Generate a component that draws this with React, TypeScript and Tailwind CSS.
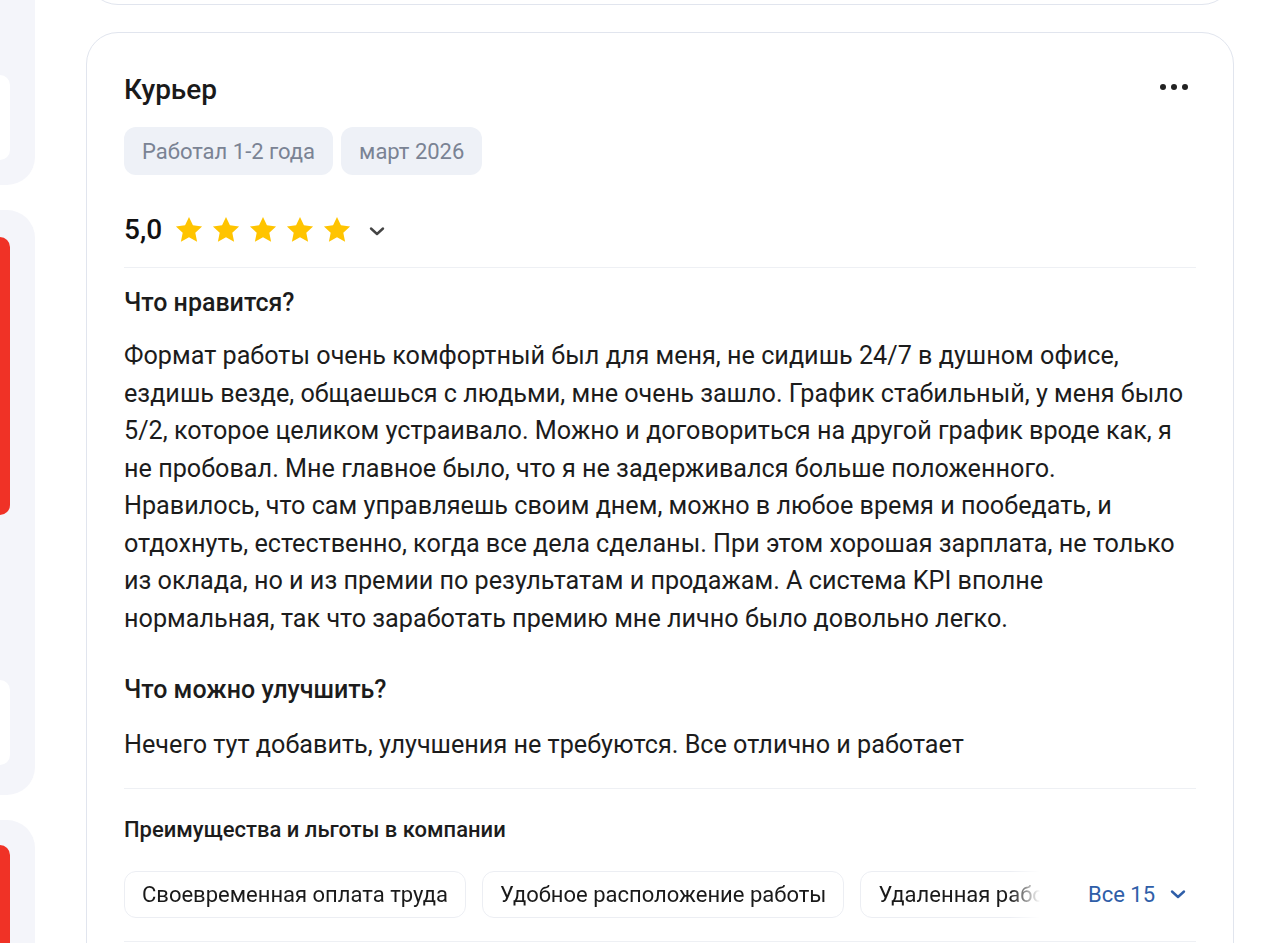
import React from "react";

const Star = () => (
  <svg width="32" height="32" viewBox="0 0 24 24" fill="#ffc400">
    <path d="M12 2.2l2.95 6.3 6.85.8-5.07 4.73 1.35 6.77L12 17.4l-6.08 3.4 1.35-6.77L2.2 9.3l6.85-.8L12 2.2z" />
  </svg>
);

const Chevron = ({ color, size = 18 }: { color: string; size?: number }) => (
  <svg width={size} height={size} viewBox="0 0 18 18" fill="none">
    <path d="M3 6.5l6 5.5 6-5.5" stroke={color} strokeWidth="2.4" strokeLinecap="round" strokeLinejoin="round" />
  </svg>
);

const bodyLines = [
  "Формат работы очень комфортный был для меня, не сидишь 24/7 в душном офисе,",
  "ездишь везде, общаешься с людьми, мне очень зашло. График стабильный, у меня было",
  "5/2, которое целиком устраивало. Можно и договориться на другой график вроде как, я",
  "не пробовал. Мне главное было, что я не задерживался больше положенного.",
  "Нравилось, что сам управляешь своим днем, можно в любое время и пообедать, и",
  "отдохнуть, естественно, когда все дела сделаны. При этом хорошая зарплата, не только",
  "из оклада, но и из премии по результатам и продажам. А система KPI вполне",
  "нормальная, так что заработать премию мне лично было довольно легко.",
];

export default function App() {
  return (
    <div className="w-[1273px] h-[943px] overflow-hidden bg-white flex font-['Roboto',sans-serif] text-[#1c1c1c]">
      {/* left column */}
      <div className="w-[35px] shrink-0 flex flex-col gap-[25px]">
        <div className="h-[185px] shrink-0 bg-[#f4f5fa] rounded-br-[28px] pt-[75px]">
          <div className="w-[10px] h-[85px] bg-white rounded-r-[10px]" />
        </div>
        <div className="h-[585px] shrink-0 bg-[#f4f5fa] rounded-r-[28px] pt-[27px] flex flex-col">
          <div className="w-[10px] h-[278px] bg-[#f03226] rounded-r-[10px]" />
          <div className="w-[10px] h-[85px] mt-[165px] bg-white rounded-r-[10px]" />
        </div>
        <div className="h-[200px] shrink-0 bg-[#f4f5fa] rounded-tr-[28px] pt-[25px]">
          <div className="w-[10px] h-[200px] bg-[#f03226] rounded-tr-[10px]" />
        </div>
      </div>

      {/* main column */}
      <div className="ml-[51px] w-[1148px] shrink-0 flex flex-col">
        <div className="-mt-[60px] h-[65px] shrink-0 rounded-[32px] border border-[#e1e5ee] bg-white" />
        <div className="mt-[27px] rounded-[32px] border border-[#e1e5ee] bg-white px-[37px] pt-[39px] pb-[40px] flex flex-col">
          <div className="flex items-start justify-between">
            <h2 className="text-[28px] leading-[36px] font-medium text-[#1a1a1a]">Курьер</h2>
            <svg width="30" height="8" viewBox="0 0 30 8" className="mt-[11px] mr-[7px]" fill="#222">
              <circle cx="4" cy="4" r="3" />
              <circle cx="15" cy="4" r="3" />
              <circle cx="26" cy="4" r="3" />
            </svg>
          </div>
          <div className="mt-[19px] flex gap-[8px]">
            <span className="h-[48px] px-[18px] flex items-center rounded-[12px] bg-[#eef1f7] text-[22px] text-[#7a8394]">
              Работал 1-2 года
            </span>
            <span className="h-[48px] px-[18px] flex items-center rounded-[12px] bg-[#eef1f7] text-[22px] text-[#7a8394]">
              март 2026
            </span>
          </div>
          <div className="mt-[37px] h-[36px] flex items-center">
            <span className="text-[28px] font-medium text-[#111] mr-[11px]">5,0</span>
            <div className="flex gap-[5px]">
              <Star />
              <Star />
              <Star />
              <Star />
              <Star />
            </div>
            <span className="ml-[15px] mt-[1px]">
              <Chevron color="#444" />
            </span>
          </div>
          <div className="mt-[19px] h-px bg-[#eef0f4]" />
          <h3 className="mt-[18px] text-[25px] leading-[34px] font-medium">Что нравится?</h3>
          <p className="mt-[17px] text-[25.2px] leading-[37.5px] whitespace-nowrap">
            {bodyLines.map((l, i) => (
              <React.Fragment key={i}>
                {l}
                {i < bodyLines.length - 1 && <br />}
              </React.Fragment>
            ))}
          </p>
          <h3 className="mt-[36px] text-[25px] leading-[34px] font-medium">Что можно улучшить?</h3>
          <p className="mt-[19px] text-[25.2px] leading-[37.5px]">
            Нечего тут добавить, улучшения не требуются. Все отлично и работает
          </p>
          <div className="mt-[24px] h-px bg-[#eef0f4]" />
          <h4 className="mt-[26px] text-[22px] leading-[30px] font-medium">Преимущества и льготы в компании</h4>
          <div className="mt-[26px] flex items-center">
            <div className="flex-1 min-w-0 overflow-hidden [mask-image:linear-gradient(to_right,black_calc(100%-30px),transparent)]">
              <div className="flex gap-[16px] w-max">
                {["Своевременная оплата труда", "Удобное расположение работы", "Удаленная работа"].map((t) => (
                  <span
                    key={t}
                    className="h-[47px] px-[17px] flex items-center rounded-[12px] border border-[#eceef3] text-[22px] text-[#1a1a1a] whitespace-nowrap"
                  >
                    {t}
                  </span>
                ))}
              </div>
            </div>
            <button className="pl-[48px] pr-[9px] flex items-center gap-[14px] text-[22px] text-[#2f5ea8]">
              Все 15
              <Chevron color="#2f5ea8" />
            </button>
          </div>
          <div className="mt-[23px] h-px bg-[#eef0f4]" />
        </div>
      </div>
    </div>
  );
}
